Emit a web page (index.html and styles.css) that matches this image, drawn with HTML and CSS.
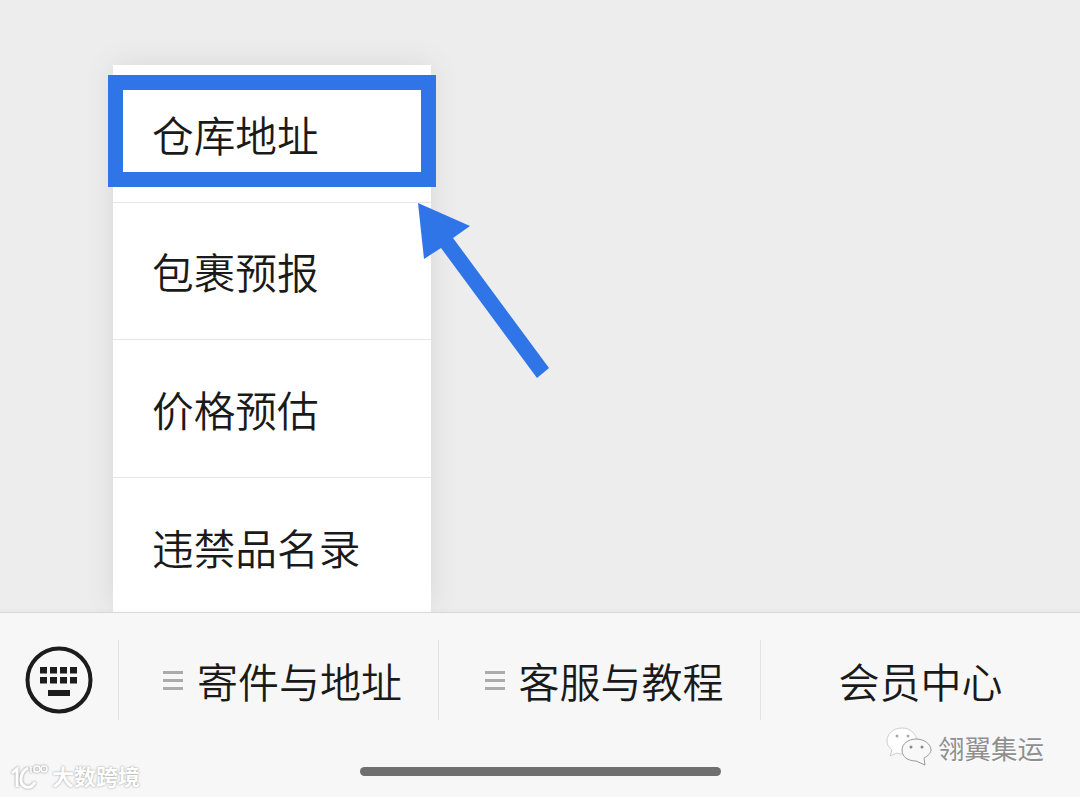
FILE: index.html
```html
<!DOCTYPE html>
<html>

<head>
  <meta charset="utf-8">
  <title>菜单</title>
  <link rel="stylesheet" href="styles.css">
</head>

<body>
  <div class="screen">

    <div class="content">
      <ul class="menu">
        <li class="menu-item">仓库地址</li>
        <li class="menu-item">包裹预报</li>
        <li class="menu-item">价格预估</li>
        <li class="menu-item">违禁品名录</li>
      </ul>
    </div>

    <!-- Blue annotations drawn over the menu -->
    <div class="highlight"></div>
    <svg class="arrow" width="140" height="185" viewBox="0 0 140 185">
      <polygon points="8,8 60,31 43,43 139,173 127,183 31,53 14,64" fill="#2f75e8" />
    </svg>

    <div class="tabbar">
      <div class="tabs">
        <div class="tab-keyboard">
          <svg width="70" height="70" viewBox="0 0 70 70">
            <circle cx="35" cy="35" r="31.5" fill="none" stroke="#1c1c1c" stroke-width="4" />
            <g fill="#1c1c1c">
              <rect x="16" y="22" width="7" height="6.5" />
              <rect x="26" y="22" width="7" height="6.5" />
              <rect x="36" y="22" width="7" height="6.5" />
              <rect x="46" y="22" width="7" height="6.5" />
              <rect x="16" y="32" width="7" height="6.5" />
              <rect x="26" y="32" width="7" height="6.5" />
              <rect x="36" y="32" width="7" height="6.5" />
              <rect x="46" y="32" width="7" height="6.5" />
              <rect x="24" y="45" width="22" height="6" />
            </g>
          </svg>
        </div>
        <div class="tab tab-one"><span class="burger"></span>寄件与地址</div>
        <div class="tab tab-two"><span class="burger"></span>客服与教程</div>
        <div class="tab tab-three">会员中心</div>
      </div>
      <div class="home-bar"></div>
    </div>

    <!-- Watermarks -->
    <div class="mark-left">
      <svg width="42" height="30" viewBox="0 0 42 30" fill="none" stroke="#fff" stroke-width="3">
        <path d="M4 13 L9 9 V27" />
        <path d="M20 8 C12 12 10 24 18 27 C22 28 25 26 27 22" />
        <path d="M23 7 V13" stroke-width="1.5" />
        <circle cx="29" cy="9" r="3" stroke-width="1.5" />
        <circle cx="36" cy="9" r="3" stroke-width="1.5" />
      </svg>
      <span>大数跨境</span>
    </div>
    <div class="mark-right">
      <svg width="46" height="40" viewBox="0 0 46 40">
        <path d="M16 1 C7 1 1 7 1 14 C1 18 3 21 6 23 L4 29 L11 26 C13 27 15 27 17 27 L28 14 C31 13 31 12 30 10 C28 5 23 1 16 1 Z" fill="#fff" stroke="#cfcfcf" />
        <path d="M30 12 C22 12 16 17 16 23 C16 30 22 34 30 34 L39 38 L38 31 C42 29 45 26 45 23 C45 17 38 12 30 12 Z" fill="#f8f8f8" stroke="#9a9a9a" />
        <circle cx="11" cy="9" r="1.5" fill="#aaa" />
        <circle cx="22" cy="9" r="1.5" fill="#aaa" />
        <circle cx="25" cy="20" r="1.5" fill="#888" />
        <circle cx="36" cy="20" r="1.5" fill="#888" />
      </svg>
      <span>翎翼集运</span>
    </div>

  </div>
</body>

</html>
```

FILE: styles.css
```css
* {
  box-sizing: border-box;
}

body {
  margin: 0;
  font-family: "Liberation Sans", "Noto Sans CJK SC", sans-serif;
  color: #222222;
}

.screen {
  position: relative;
  width: 1080px;
  height: 797px;
  overflow: hidden;
  display: flex;
  flex-direction: column;
  background-color: #ededee;
}

.content {
  height: 612px;
  padding: 65px 0 0 113px;
}

/* Popup menu */

.menu {
  list-style: none;
  margin: 0;
  padding: 0;
  width: 318px;
  height: 547px;
  background-color: #ffffff;
  box-shadow: 0 0 30px rgba(0, 0, 0, 0.09);
}

.menu-item {
  height: 137.5px;
  padding: 1px 0 0 39px;
  display: flex;
  align-items: center;
  font-size: 41.7px;
  font-weight: 350;
  color: #1a1a1a;
  border-bottom: 1px solid #e6e6e6;
}

.menu-item:last-child {
  border-bottom: none;
}

/* Annotations */

.highlight {
  position: absolute;
  left: 108px;
  top: 75px;
  width: 328px;
  height: 112px;
  border: 15px solid #2f75e8;
}

.arrow {
  position: absolute;
  left: 410px;
  top: 195px;
}

/* Bottom bar */

.tabbar {
  flex: 1;
  display: flex;
  flex-direction: column;
  background-color: #f7f7f7;
  border-top: 1px solid #d8d8d8;
  box-shadow: 0 -1px 6px rgba(0, 0, 0, 0.03);
  z-index: 0;
}

.tabs {
  display: flex;
  height: 80px;
  margin-top: 27px;
}

.tab-keyboard {
  width: 118px;
  display: flex;
  align-items: center;
  justify-content: center;
}

.tab {
  display: flex;
  align-items: center;
  justify-content: center;
  font-size: 41px;
  font-weight: 350;
  color: #1a1a1a;
  border-left: 1px solid #e3e3e3;
}

.tab-one {
  width: 320px;
  padding-left: 8px;
}

.tab-two {
  width: 322px;
  padding-left: 9px;
}

.tab-three {
  flex: 1;
}

.burger {
  width: 20px;
  height: 19px;
  margin-right: 14px;
  border-top: 3px solid #ababab;
  border-bottom: 3px solid #ababab;
  background: linear-gradient(#ababab, #ababab) center / 100% 3px no-repeat;
}

.home-bar {
  width: 361px;
  height: 9px;
  margin: 47px auto 0;
  border-radius: 5px;
  background-color: #6f6f6f;
}

/* Watermarks */

.mark-left {
  position: absolute;
  left: 8px;
  top: 759px;
  display: flex;
  align-items: center;
  gap: 2px;
  font-size: 22px;
  font-weight: 700;
  color: #ffffff;
  text-shadow: 0 0 2px #8a8a8a;
}

.mark-left svg {
  filter: drop-shadow(0 0 1px #8a8a8a);
}

.mark-right {
  position: absolute;
  left: 886px;
  top: 727px;
  display: flex;
  align-items: center;
  gap: 6px;
  font-size: 26.5px;
  color: #8f8f8f;
  text-shadow: 1px 1px 0 #ffffff;
}
```
